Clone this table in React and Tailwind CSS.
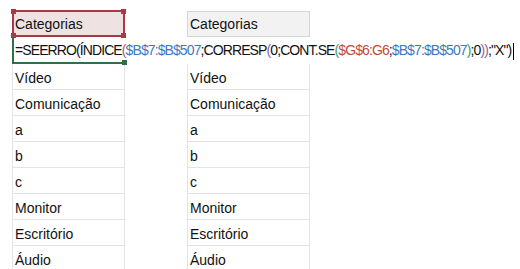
const font = { fontFamily: '"Liberation Sans", Arial, sans-serif' }

const rows = ['Vídeo', 'Comunicação', 'a', 'b', 'c', 'Monitor', 'Escritório', 'Áudio']

function Handle({ className }) {
  return <span className={`absolute w-[5px] h-[5px] ${className}`} />
}

function Rows({ items }) {
  return (
    <div className="border-x border-[#e3e3e3]">
      {items.map((r, i) => (
        <div key={i} className="h-[26px] border-b border-[#e3e3e3] pl-[2px] pt-[2px] leading-[24px] text-[14px] text-[#111]">
          {r}
        </div>
      ))}
    </div>
  )
}

export default function App() {
  return (
    <div className="w-[520px] h-[269px] overflow-hidden bg-white" style={font}>
      <div className="flex pt-[10px] pl-[12px]">
        {/* coluna com fórmula em edição */}
        <div className="w-[113px] shrink-0">
          <div className="relative h-[27px] bg-[#eee2e2] border-2 border-[#a83a46] pl-[1px] pt-[2px] leading-[21px] text-[14px] text-[#111]">
            Categorias
            <Handle className="bg-[#a83a46] -left-[3px] -top-[3px]" />
            <Handle className="bg-[#a83a46] -right-[3px] -top-[3px]" />
            <Handle className="bg-[#a83a46] -left-[3px] -bottom-[3px]" />
            <Handle className="bg-[#a83a46] -right-[3px] -bottom-[3px]" />
          </div>
          <div className="relative h-[27px] border-l-2 border-b-2 border-[#2e7047] pl-[1px] pt-[2px] leading-[23px] text-[14px] tracking-[-0.9px] text-[#111] whitespace-nowrap">
            <span>=SEERRO(ÍNDICE</span>
            <span className="text-[#c0506a]">(</span>
            <span className="text-[#3b78c8]">$B$7:$B$507</span>
            <span>;CORRESP</span>
            <span className="text-[#8a5fb0]">(</span>
            <span>0;CONT.SE</span>
            <span className="text-[#3e9a6e]">(</span>
            <span className="text-[#c24a3c]">$G$6:G6</span>
            <span>;</span>
            <span className="text-[#3b78c8]">$B$7:$B$507</span>
            <span className="text-[#3e9a6e]">)</span>
            <span>;0</span>
            <span className="text-[#8a5fb0]">)</span>
            <span className="text-[#c0506a]">)</span>
            <span>;"X")</span>
            <span className="inline-block w-px h-[17px] bg-black align-middle ml-[2px]" />
            <Handle className="bg-[#2e7047] -right-[2px] -bottom-[3px]" />
          </div>
          <Rows items={rows} />
        </div>

        {/* coluna de resultado */}
        <div className="w-[123px] shrink-0 ml-[62px] pt-px">
          <div className="h-[26px] bg-[#f2f2f2] border border-[#d6d6d6] pl-[2px] pt-[1px] leading-[23px] text-[14px] text-[#111]">
            Categorias
          </div>
          <div className="h-[27px]" />
          <Rows items={rows} />
        </div>
      </div>
    </div>
  )
}
